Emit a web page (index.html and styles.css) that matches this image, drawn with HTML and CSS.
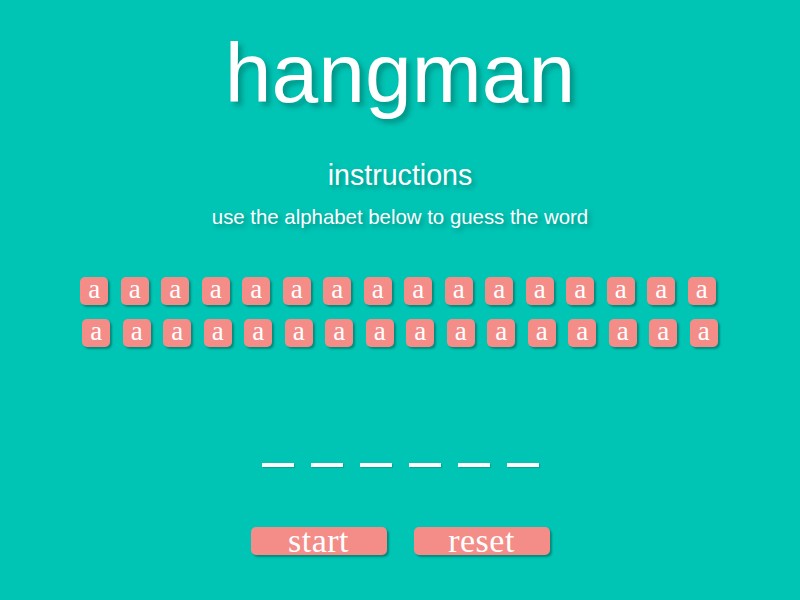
FILE: index.html
```html
<!DOCTYPE html>
<html lang="en">
<head>
<meta charset="utf-8">
<title>hangman</title>
<link rel="stylesheet" href="styles.css">
</head>
<body>
<main class="game">
  <h1 class="title">hangman</h1>
  <h2 class="instructions">instructions</h2>
  <p class="hint">use the alphabet below to guess the word</p>
  <div class="alphabet">
    <div class="row row-first">
      <span class="tile">a</span><span class="tile">a</span><span class="tile">a</span><span class="tile">a</span>
      <span class="tile">a</span><span class="tile">a</span><span class="tile">a</span><span class="tile">a</span>
      <span class="tile">a</span><span class="tile">a</span><span class="tile">a</span><span class="tile">a</span>
      <span class="tile">a</span><span class="tile">a</span><span class="tile">a</span><span class="tile">a</span>
    </div>
    <div class="row">
      <span class="tile">a</span><span class="tile">a</span><span class="tile">a</span><span class="tile">a</span>
      <span class="tile">a</span><span class="tile">a</span><span class="tile">a</span><span class="tile">a</span>
      <span class="tile">a</span><span class="tile">a</span><span class="tile">a</span><span class="tile">a</span>
      <span class="tile">a</span><span class="tile">a</span><span class="tile">a</span><span class="tile">a</span>
    </div>
  </div>
  <div class="word">
    <span class="dash"></span><span class="dash"></span><span class="dash"></span>
    <span class="dash"></span><span class="dash"></span><span class="dash"></span>
  </div>
  <div class="controls">
    <button class="btn">start</button>
    <button class="btn">reset</button>
  </div>
</main>
</body>
</html>
```

FILE: styles.css
```css
html, body {
  margin: 0;
  padding: 0;
  height: 100%;
}

body {
  background: #00c4b4;
  color: #ffffff;
  font-family: "Liberation Sans", Arial, sans-serif;
  overflow: hidden;
}

.game {
  display: flex;
  flex-direction: column;
  align-items: center;
}

.title {
  margin: 31px 0 0;
  font-size: 84px;
  line-height: 84px;
  font-weight: normal;
  text-shadow: 4px 4px 5px rgba(0, 90, 80, 0.45);
}

.instructions {
  margin: 46px 0 0;
  font-size: 28.6px;
  line-height: 28px;
  font-weight: normal;
  text-shadow: 3px 3px 4px rgba(0, 90, 80, 0.4);
}

.hint {
  margin: 18px 0 0;
  font-size: 20.4px;
  line-height: 20px;
  text-shadow: 3px 3px 4px rgba(0, 90, 80, 0.4);
}

.alphabet {
  margin-top: 50px;
  display: flex;
  flex-direction: column;
  align-items: center;
  gap: 14px;
}

.row {
  display: flex;
  gap: 12.5px;
}

.row-first {
  padding-right: 4px;
}

.tile {
  width: 28px;
  height: 28px;
  border-radius: 5px;
  background: #f48c88;
  box-shadow: 2px 2px 2px rgba(0, 70, 60, 0.45);
  display: flex;
  align-items: center;
  justify-content: center;
  font-family: "Liberation Serif", "Times New Roman", serif;
  font-size: 27px;
  line-height: 1;
  padding-bottom: 3px;
  box-sizing: border-box;
}

.word {
  margin-top: 116px;
  display: flex;
  gap: 17px;
}

.dash {
  width: 32px;
  height: 4px;
  background: #ffffff;
  box-shadow: 1px 1px 1px rgba(0, 70, 60, 0.25);
}

.controls {
  margin-top: 60px;
  display: flex;
  gap: 27px;
}

.btn {
  width: 136px;
  height: 28px;
  border: none;
  border-radius: 5px;
  background: #f48c88;
  box-shadow: 2px 2px 2px rgba(0, 70, 60, 0.45);
  color: #ffffff;
  font-family: "Liberation Serif", "Times New Roman", serif;
  font-size: 34px;
  letter-spacing: 0.5px;
  line-height: 28px;
  padding: 0 0 1px;
  display: flex;
  align-items: center;
  justify-content: center;
  overflow: visible;
}
```
